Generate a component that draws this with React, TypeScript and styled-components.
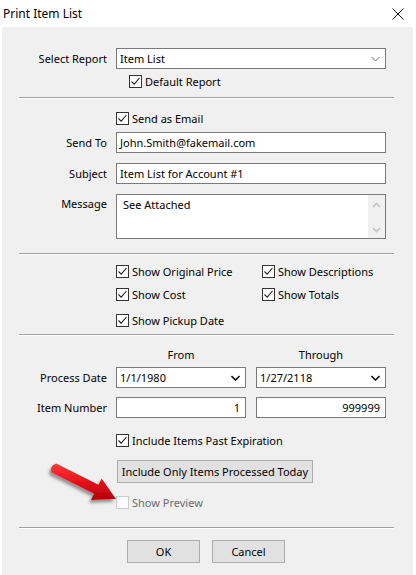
import React from 'react';
import styled, {createGlobalStyle} from 'styled-components';

const Global = createGlobalStyle`
  html, body {
    margin: 0;
    padding: 0;
    background: #fff;
  }
  body {
    font-family: "Noto Sans", "Open Sans", sans-serif;
    font-size: 11px;
    color: #000;
  }
`;

const Window = styled.div`
  width: 416px;
  height: 575px;
  display: flex;
  flex-direction: column;
  background: #fff;
  overflow: hidden;
`;
const TitleBar = styled.div`
  height: 27px;
  flex: none;
  display: flex;
  align-items: center;
  justify-content: space-between;
  padding: 0 12px 0 3px;
`;
const Title = styled.div`
  font-size: 12px;
  color: #000;
`;
const Body = styled.div`
  position: relative;
  flex: 1;
  margin: 0 3px 0 2px;
  background: #f0f0f0;
  display: flex;
  flex-direction: column;
`;
const Row = styled.div`
  display: grid;
  grid-template-columns: 114px 270px;
  align-items: ${({$top}: {$top?: boolean; $mt: number}) => $top ? 'start' : 'center'};
  margin-top: ${({$mt}: {$top?: boolean; $mt: number}) => $mt}px;
`;
const Label = styled.div`
  text-align: right;
  padding-right: 9px;
  white-space: nowrap;
  line-height: 16px;
  padding-top: ${({$pt}: {$pt?: number}) => $pt ?? 0}px;
`;
const Field = styled.div`
  box-sizing: border-box;
  height: 21px;
  background: #fff;
  border: 1px solid #7a7a7a;
  display: flex;
  align-items: center;
  padding: 0 5px 0 3px;
  justify-content: ${({$right}: {$right?: boolean}) => $right ? 'flex-end' : 'space-between'};
  white-space: nowrap;
`;
const Area = styled.div`
  box-sizing: border-box;
  height: 45px;
  background: #fff;
  border: 1px solid #7a7a7a;
  display: flex;
  justify-content: space-between;
`;
const AreaText = styled.div`
  padding: 2px 6px;
`;
const Scroll = styled.div`
  width: 17px;
  background: #f0f0f0;
  display: flex;
  flex-direction: column;
  justify-content: space-between;
  align-items: center;
  padding: 7px 0 5px;
`;
const Separator = styled.div`
  margin: ${({$mt}: {$mt: number}) => $mt}px 0 0 17px;
  width: 375px;
  height: 1px;
  border-bottom: 1px solid #fff;
  background: #a0a0a0;
`;
const CheckRow = styled.label`
  display: flex;
  align-items: center;
  gap: 3px;
  height: 17px;
  white-space: nowrap;
  color: ${({$disabled}: {$disabled?: boolean}) => $disabled ? '#6d6d6d' : '#000'};
`;
const Box = styled.span`
  box-sizing: border-box;
  width: 13px;
  height: 13px;
  flex: none;
  background: #fff;
  border: 1px solid ${({$disabled}: {$disabled?: boolean}) => $disabled ? '#cccccc' : '#333'};
  display: flex;
  align-items: center;
  justify-content: center;
`;
const Indent = styled.div`
  display: flex;
  padding-left: ${({$pl}: {$pl: number}) => $pl}px;
`;
const CheckGrid = styled.div`
  display: grid;
  grid-template-columns: 146px auto;
  grid-template-rows: 17px 17px 17px;
  row-gap: 6px;
  & > :nth-child(5) {
    margin-top: 3px;
  }
`;
const Pair = styled.div`
  display: grid;
  grid-template-columns: 130px 130px;
  column-gap: 10px;
`;
const Heading = styled.div`
  text-align: center;
  line-height: 16px;
`;
const Button = styled.button`
  box-sizing: border-box;
  height: 23px;
  width: ${({$w}: {$w: number}) => $w}px;
  background: #e1e1e1;
  border: 1px solid #adadad;
  font-family: inherit;
  font-size: 11px;
  color: #000;
  padding: 0;
  white-space: nowrap;
`;
const Footer = styled.div`
  display: flex;
  gap: 12px;
  margin: 11px 0 0 125px;
`;
const Arrow = styled.svg`
  position: absolute;
  left: 38px;
  top: 428px;
`;

const Check = () => (
  <svg width="11" height="11" viewBox="0 0 11 11">
    <path d="M1.5 5.5 L4.2 8.2 L9.5 2" fill="none" stroke="#222" strokeWidth="1.1"/>
  </svg>
);

const CheckBox = ({label, checked = true, disabled}: {label: string; checked?: boolean; disabled?: boolean}) => (
  <CheckRow $disabled={disabled}>
    <Box $disabled={disabled}>{checked && <Check/>}</Box>
    {label}
  </CheckRow>
);

const Chevron = ({bold}: {bold?: boolean}) => (
  <svg width="9" height="6" viewBox="0 0 9 6">
    <path d="M0.5 1 L4.5 5 L8.5 1" fill="none" stroke={bold ? '#111' : '#666'} strokeWidth={bold ? 1.6 : 1}/>
  </svg>
);

const Small = ({up}: {up?: boolean}) => (
  <svg width="9" height="6" viewBox="0 0 9 6">
    <path d={up ? 'M1 5 L4.5 1.5 L8 5' : 'M1 1 L4.5 4.5 L8 1'} fill="none" stroke="#c2c2c2" strokeWidth="1.6"/>
  </svg>
);

export default function App() {
  return (
    <Window>
      <Global/>
      <TitleBar>
        <Title>Print Item List</Title>
        <svg width="12" height="12" viewBox="0 0 12 12">
          <path d="M0.5 0.5 L11.5 11.5 M11.5 0.5 L0.5 11.5" stroke="#111" strokeWidth="1"/>
        </svg>
      </TitleBar>
      <Body>
        <Row $mt={21}>
          <Label>Select Report</Label>
          <Field>Item List<Chevron/></Field>
        </Row>
        <Row $mt={4}>
          <span/>
          <Indent $pl={13}><CheckBox label="Default Report"/></Indent>
        </Row>
        <Separator $mt={7}/>

        <Row $mt={11}>
          <span/>
          <CheckBox label="Send as Email"/>
        </Row>
        <Row $mt={5}>
          <Label>Send To</Label>
          <Field>John.Smith@fakemail.com<span/></Field>
        </Row>
        <Row $mt={10}>
          <Label>Subject</Label>
          <Field>Item List for Account #1<span/></Field>
        </Row>
        <Row $mt={10} $top>
          <Label $pt={2}>Message</Label>
          <Area>
            <AreaText>See Attached</AreaText>
            <Scroll><Small up/><Small/></Scroll>
          </Area>
        </Row>
        <Separator $mt={14}/>

        <Row $mt={8}>
          <span/>
          <CheckGrid>
            <CheckBox label="Show Original Price"/>
            <CheckBox label="Show Descriptions"/>
            <CheckBox label="Show Cost"/>
            <CheckBox label="Show Totals"/>
            <CheckBox label="Show Pickup Date"/>
          </CheckGrid>
        </Row>
        <Separator $mt={8}/>

        <Row $mt={11}>
          <span/>
          <Pair>
            <Heading>From</Heading>
            <Heading>Through</Heading>
          </Pair>
        </Row>
        <Row $mt={4}>
          <Label>Process Date</Label>
          <Pair>
            <Field>1/1/1980<Chevron bold/></Field>
            <Field>1/27/2118<Chevron bold/></Field>
          </Pair>
        </Row>
        <Row $mt={9}>
          <Label>Item Number</Label>
          <Pair>
            <Field $right>1</Field>
            <Field $right>999999</Field>
          </Pair>
        </Row>
        <Row $mt={14}>
          <span/>
          <CheckBox label="Include Items Past Expiration"/>
        </Row>
        <Row $mt={11}>
          <span/>
          <Indent $pl={1}><Button $w={196}>Include Only Items Processed Today</Button></Indent>
        </Row>
        <Row $mt={11}>
          <span/>
          <CheckBox label="Show Preview" checked={false} disabled/>
        </Row>
        <Separator $mt={16}/>

        <Footer>
          <Button $w={73}>OK</Button>
          <Button $w={73}>Cancel</Button>
        </Footer>

        <Arrow width="84" height="62" viewBox="38 455 84 62">
          <defs>
            <linearGradient id="red" x1="0" y1="0" x2="0" y2="1">
              <stop offset="0" stopColor="#ff3a3a"/>
              <stop offset="0.5" stopColor="#e8101a"/>
              <stop offset="1" stopColor="#b00008"/>
            </linearGradient>
            <filter id="shadow" x="-20%" y="-20%" width="140%" height="160%">
              <feDropShadow dx="-2" dy="3" stdDeviation="1.6" floodColor="#555" floodOpacity="0.6"/>
            </filter>
          </defs>
          <path
            d="M54.2 463.5 L96.5 484.8 L99.6 478.5 L114 499 L89 500.1 L92.1 493.8 L49.8 472.5 Q47 466 54.2 463.5 Z"
            fill="url(#red)"
            filter="url(#shadow)"
          />
        </Arrow>
      </Body>
    </Window>
  );
}
